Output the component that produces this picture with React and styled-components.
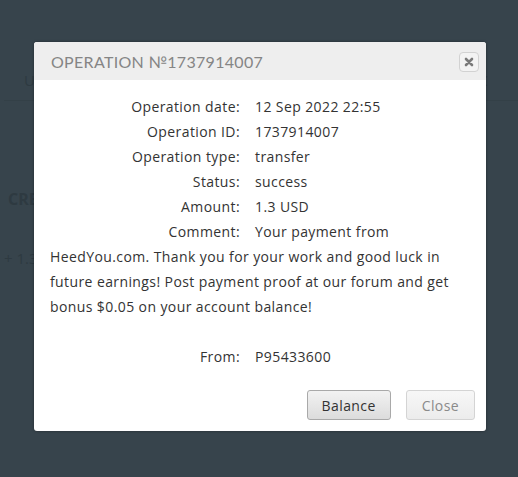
import React from "react";
import styled, { createGlobalStyle } from "styled-components";

const Global = createGlobalStyle`
  html, body {
    margin: 0;
    padding: 0;
    background: #37444c;
  }
`;

const Page = styled.div`
  position: relative;
  width: 518px;
  height: 477px;
  overflow: hidden;
  background: #37444c;
  font-family: "Open Sans", "Liberation Sans", sans-serif;
`;

const Backdrop = styled.div`
  display: flex;
  flex-direction: column;
  padding: 70px 0 0 4px;
  color: #2e3a41;
`;

const BackRow = styled.div`
  display: flex;
  justify-content: space-between;
  font-size: ${(p) => p.size || 15}px;
  font-weight: ${(p) => (p.bold ? 700 : 400)};
  padding: 0 ${(p) => p.pr || 0}px 0 ${(p) => p.pl || 0}px;
  margin-bottom: ${(p) => p.mb || 0}px;
  border-bottom: ${(p) => (p.line ? "1px solid #334047" : "none")};
  height: ${(p) => p.h || 20}px;
`;

const Modal = styled.div`
  position: absolute;
  left: 34px;
  top: 42px;
  width: 452px;
  height: 389px;
  background: #fff;
  border-radius: 3px;
  box-shadow: 0 0 3px rgba(0, 0, 0, 0.4);
  display: flex;
  flex-direction: column;
  overflow: hidden;
`;

const Header = styled.div`
  height: 38px;
  background: #eeeeee;
  display: flex;
  align-items: center;
  justify-content: space-between;
  padding: 0 7px 0 17px;
`;

const Title = styled.div`
  font-family: "Lato", "Open Sans", sans-serif;
  font-size: 16px;
  font-weight: 400;
  letter-spacing: 0.3px;
  color: #858585;
  text-transform: uppercase;
`;

const CloseX = styled.button`
  width: 20px;
  height: 20px;
  padding: 0;
  border: 1px solid #d2d2d2;
  border-radius: 4px;
  background: #f3f3f3;
  display: flex;
  align-items: center;
  justify-content: center;
  margin-top: 1px;
`;

const Body = styled.div`
  flex: 1;
  padding: 14px 16px 0 16px;
  font-size: 14px;
  line-height: 25px;
  letter-spacing: 0.4px;
  color: #333;
`;

const Row = styled.div`
  margin-top: ${(p) => p.gap || 0}px;
`;

const Label = styled.span`
  display: inline-block;
  width: 190px;
  text-align: right;
  margin-right: 15px;
`;

const Value = styled.span``;

const Footer = styled.div`
  display: flex;
  justify-content: flex-end;
  gap: 15px;
  padding: 0 11px 11px 0;
`;

const Button = styled.button`
  height: 30px;
  padding: 0 ${(p) => (p.muted ? 15 : 14)}px;
  font-family: "Open Sans", "Liberation Sans", sans-serif;
  font-size: 14px;
  letter-spacing: 0.4px;
  color: ${(p) => (p.muted ? "#8a8a8a" : "#333")};
  border: 1px solid ${(p) => (p.muted ? "#d4d4d4" : "#a9a9a9")};
  border-radius: 3px;
  background: ${(p) =>
    p.muted
      ? "linear-gradient(#f7f7f7, #ececec)"
      : "linear-gradient(#f2f2f2, #dcdcdc)"};
`;

const rows = [
  ["Operation date:", "12 Sep 2022 22:55"],
  ["Operation ID:", "1737914007"],
  ["Operation type:", "transfer"],
  ["Status:", "success"],
  ["Amount:", "1.3 USD"],
  [
    "Comment:",
    "Your payment from HeedYou.com. Thank you for your work and good luck in future earnings! Post payment proof at our forum and get bonus $0.05 on your account balance!",
  ],
];

export default function App() {
  return (
    <Page>
      <Global />
      <Backdrop>
        <BackRow pl={20} pr={30} h={30} line mb={87}>
          <span>U</span>
          <span>C</span>
        </BackRow>
        <BackRow bold size={16} pl={4} h={40} mb={20}>
          <span>CRE</span>
        </BackRow>
        <BackRow size={15}>
          <span>+ 1.3</span>
        </BackRow>
      </Backdrop>
      <Modal>
        <Header>
          <Title>Operation №1737914007</Title>
          <CloseX aria-label="close">
            <svg width="10" height="10" viewBox="0 0 10 10">
              <path
                d="M2 2 L8 8 M8 2 L2 8"
                stroke="#7a7a7a"
                strokeWidth="2.6"
                strokeLinecap="round"
              />
            </svg>
          </CloseX>
        </Header>
        <Body>
          {rows.map(([l, v]) => (
            <Row key={l}>
              <Label>{l}</Label>
              <Value>{v}</Value>
            </Row>
          ))}
          <Row gap={25}>
            <Label>From:</Label>
            <Value>P95433600</Value>
          </Row>
        </Body>
        <Footer>
          <Button>Balance</Button>
          <Button muted>Close</Button>
        </Footer>
      </Modal>
    </Page>
  );
}
